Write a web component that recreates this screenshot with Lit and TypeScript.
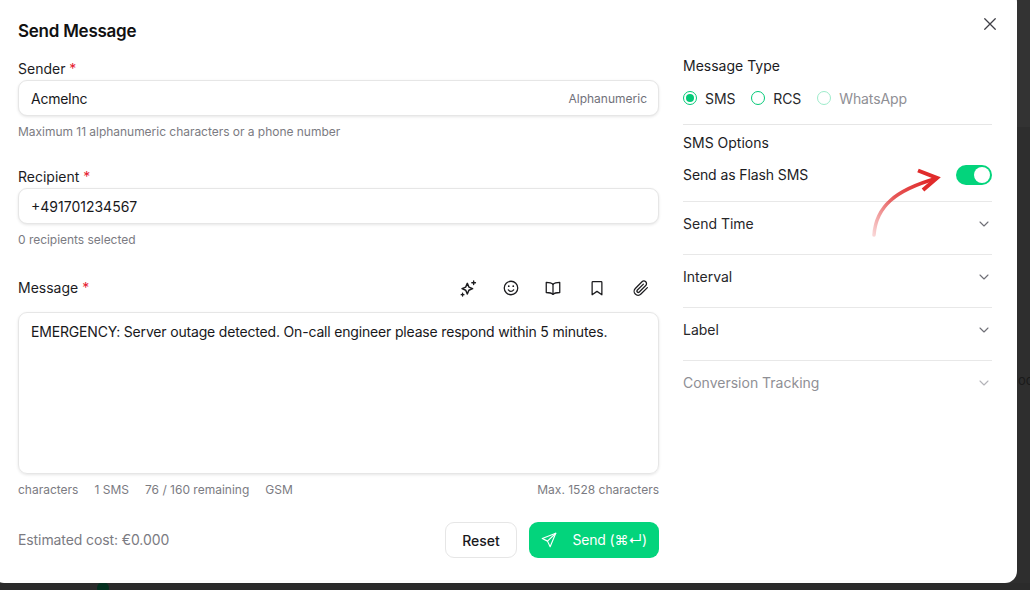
import { LitElement, html, css, svg } from 'lit';
import { customElement } from 'lit/decorators.js';

const icon = (body: unknown, size = 18, sw = 1.5) => html`<svg
  width=${size} height=${size} viewBox="0 0 24 24" fill="none" stroke="currentColor"
  stroke-width=${sw} stroke-linecap="round" stroke-linejoin="round">${body}</svg>`;

const chevron = icon(svg`<path d="M6 9l6 6 6-6"/>`, 16, 1.6);

@customElement('app-root')
export class AppRoot extends LitElement {
  static styles = css`
    :host {
      display: block;
      position: relative;
      width: 1030px;
      height: 590px;
      overflow: hidden;
      background: linear-gradient(#333 0 127px, #2e2e2e 127px 583px, #2b2b2b 583px);
      font-family: Inter, 'Noto Sans', sans-serif;
      color: #18181b;
      font-size: 14px;
    }
    .modal {
      position: relative;
      box-sizing: border-box;
      width: 1025px;
      height: 593px;
      margin: -10px 0 0 -8px;
      background: #fff;
      border-radius: 12px;
      padding: 10px 25px 0 26px;
      display: flex;
      gap: 24px;
    }
    .left {
      width: 641px;
      display: flex;
      flex-direction: column;
    }
    .right {
      width: 309px;
      padding-top: 57px;
    }
    h1 {
      margin: 0;
      padding-top: 20px;
      height: 22px;
      line-height: 22px;
      font-size: 17px;
      font-weight: 600;
      letter-spacing: -0.25px;
      color: #111;
    }
    .label {
      height: 18px;
      line-height: 18px;
      font-size: 14px;
      color: #1c1c1f;
    }
    .req {
      color: #e5202e;
    }
    .sender-label { margin-top: 18px; }
    .recipient-label { margin-top: 29px; }
    .input {
      box-sizing: border-box;
      height: 36px;
      margin-top: 2px;
      padding: 0 11px 0 12px;
      display: flex;
      align-items: center;
      justify-content: space-between;
      border: 1px solid #e6e6e6;
      border-radius: 9px;
      box-shadow: 0 1px 3px rgba(0, 0, 0, 0.1);
      background: #fff;
      color: #18181b;
    }
    .name { letter-spacing: -0.25px; }
    .hint {
      font-size: 12px;
      color: #71717a;
    }
    .help {
      margin-top: 8px;
      height: 15px;
      line-height: 15px;
      font-size: 12px;
      letter-spacing: -0.03px;
      color: #7b7b82;
    }
    .message-head {
      margin-top: 29px;
      height: 24px;
      display: flex;
      align-items: center;
      justify-content: space-between;
    }
    .tools {
      display: flex;
      gap: 26px;
      padding-right: 9px;
      color: #1c1c1f;
    }
    .tools svg { display: block; }
    .tools svg:nth-child(-n + 2) { margin-right: -2px; }
    .textarea {
      box-sizing: border-box;
      height: 162px;
      margin-top: 12px;
      padding: 9px 12px;
      line-height: 20px;
      letter-spacing: -0.175px;
      border: 1px solid #e6e6e6;
      border-radius: 9px;
      box-shadow: 0 1px 3px rgba(0, 0, 0, 0.1);
      color: #18181b;
    }
    .counts {
      margin-top: 8px;
      height: 16px;
      line-height: 16px;
      display: flex;
      justify-content: space-between;
      font-size: 12px;
      color: #7b7b82;
    }
    .counts div {
      display: flex;
      gap: 16px;
    }
    .footer {
      margin-top: 24px;
      display: flex;
      align-items: center;
      justify-content: space-between;
    }
    .cost {
      color: #7b7b82;
      font-size: 14px;
      line-height: 16px;
      letter-spacing: -0.1px;
    }
    .actions {
      display: flex;
      gap: 12px;
    }
    .btn {
      box-sizing: border-box;
      height: 36px;
      border-radius: 9px;
      display: flex;
      align-items: center;
      font-family: inherit;
      font-size: 14px;
      font-weight: 500;
    }
    .reset {
      width: 72px;
      justify-content: center;
      background: #fff;
      border: 1px solid #e6e6e6;
      color: #18181b;
    }
    .send {
      width: 130px;
      padding: 0 12px 0 11px;
      justify-content: space-between;
      background: #03d47c;
      border: none;
      color: #fff;
      font-weight: 400;
      letter-spacing: -0.15px;
    }
    .send span { padding-bottom: 1px; }
    .section-title {
      height: 18px;
      line-height: 18px;
      color: #1c1c1f;
    }
    .radios {
      margin-top: 14px;
      height: 18px;
      display: flex;
      gap: 16px;
      align-items: center;
      letter-spacing: -0.1px;
    }
    .radio {
      display: flex;
      align-items: center;
      gap: 8px;
      color: #27272a;
    }
    .radio i {
      box-sizing: border-box;
      width: 14px;
      height: 14px;
      border-radius: 50%;
      border: 1.5px solid #03c977;
      display: flex;
      align-items: center;
      justify-content: center;
    }
    .radio.on i::after {
      content: '';
      width: 8px;
      height: 8px;
      border-radius: 50%;
      background: #03c977;
    }
    .radio.off { color: #8f8f95; }
    .radio.off i { border-color: #9deccb; }
    .rule {
      height: 1px;
      background: #e6e6e6;
    }
    .flash-rule { margin-top: 17px; }
    .options-title { margin-top: 9px; }
    .flash {
      margin-top: 13px;
      height: 20px;
      display: flex;
      align-items: center;
      justify-content: space-between;
      color: #1c1c1f;
      letter-spacing: -0.1px;
    }
    .flash-text { padding-bottom: 1px; }
    .toggle {
      box-sizing: border-box;
      width: 36px;
      height: 20px;
      padding: 2px;
      border-radius: 10px;
      background: #03d47c;
      display: flex;
      justify-content: flex-end;
    }
    .toggle::after {
      content: '';
      width: 16px;
      height: 16px;
      border-radius: 50%;
      background: #fff;
    }
    .accordion {
      box-sizing: border-box;
      height: 53px;
      padding-bottom: 9px;
      border-top: 1px solid #e8e8e8;
      display: flex;
      align-items: center;
      justify-content: space-between;
      color: #27272a;
    }
    .first { margin-top: 16px; }
    .accordion svg { color: #6f6f76; }
    .accordion.disabled { color: #8f8f95; }
    .accordion.disabled svg { color: #b4b4b9; }
    .close {
      position: absolute;
      top: 25px;
      right: 18px;
      color: #3f3f46;
    }
    .close svg { display: block; }
    .arrow {
      position: absolute;
      left: 876px;
      top: 176px;
    }
    .behind {
      position: absolute;
      left: 1018px;
      top: 372px;
      font-size: 13px;
      color: #1a1a1a;
    }
    .dot {
      position: absolute;
      left: 97px;
      top: 582px;
      width: 12px;
      height: 12px;
      border-radius: 50%;
      background: #04301f;
    }
  `;

  render() {
    return html`
      <span class="behind">oc</span>
      <span class="dot"></span>
      <div class="modal">
        <div class="left">
          <h1>Send Message</h1>

          <div class="label sender-label">Sender <span class="req">*</span></div>
          <div class="input"><span class="name">AcmeInc</span><span class="hint">Alphanumeric</span></div>
          <div class="help">Maximum 11 alphanumeric characters or a phone number</div>

          <div class="label recipient-label">Recipient <span class="req">*</span></div>
          <div class="input"><span>+491701234567</span></div>
          <div class="help">0 recipients selected</div>

          <div class="message-head">
            <div class="label">Message <span class="req">*</span></div>
            <div class="tools">
              ${icon(svg`<path d="M10.500 5.500l2 4.700 4.700 2-4.700 2-2 4.700-2-4.700-4.700-2 4.700-2z" stroke-width="1.900"/><path d="M18.500 2.500v4.500M16.200 4.700h4.600M4.500 18v3.500M2.800 19.800h3.400" stroke-width="1.700"/>`, 19)}
              ${icon(svg`<circle cx="12" cy="12" r="9"/><path d="M8.500 14.500c1 1.300 2.200 2 3.500 2s2.500-.7 3.500-2"/><path d="M9 9.500h.01M15 9.500h.01" stroke-width="2.400"/>`, 18, 1.7)}
              ${icon(svg`<path d="M12 7c-1.500-1.500-3.500-2.500-9-2.500V18c5.500 0 7.500.8 9 2.500 1.500-1.700 3.500-2.500 9-2.500V4.500C15.500 4.500 13.500 5.500 12 7z"/><path d="M12 7v13.500"/>`, 18, 1.7)}
              ${icon(svg`<path d="M6.500 3.500h11a1 1 0 0 1 1 1V21L12 16.500 5.500 21V4.500a1 1 0 0 1 1-1z"/>`, 18, 1.7)}
              ${icon(svg`<path d="M20.500 11.500l-8.600 8.600a5.300 5.300 0 0 1-7.500-7.500l8.900-8.900a3.500 3.500 0 0 1 5 5l-8.900 8.900a1.800 1.800 0 0 1-2.500-2.500l8.300-8.300"/>`, 18, 1.7)}
            </div>
          </div>
          <div class="textarea">EMERGENCY: Server outage detected. On-call engineer please respond within 5 minutes.</div>
          <div class="counts">
            <div><span>characters</span><span>1 SMS</span><span>76 / 160 remaining</span><span>GSM</span></div>
            <span>Max. 1528 characters</span>
          </div>

          <div class="footer">
            <span class="cost">Estimated cost: €0.000</span>
            <div class="actions">
              <button class="btn reset">Reset</button>
              <button class="btn send">
                ${icon(svg`<path d="M21 3L3 10l7 3.500L13.500 21z"/><path d="M10 13.500L21 3"/>`, 18, 1.5)}
                <span>Send (⌘↵)</span>
              </button>
            </div>
          </div>
        </div>

        <div class="right">
          <div class="section-title">Message Type</div>
          <div class="radios">
            <label class="radio on"><i></i>SMS</label>
            <label class="radio"><i></i>RCS</label>
            <label class="radio off"><i></i>WhatsApp</label>
          </div>
          <div class="rule flash-rule"></div>
          <div class="section-title options-title">SMS Options</div>
          <div class="flash"><span class="flash-text">Send as Flash SMS</span><span class="toggle"></span></div>
          <div class="accordion first"><span>Send Time</span>${chevron}</div>
          <div class="accordion"><span>Interval</span>${chevron}</div>
          <div class="accordion"><span>Label</span>${chevron}</div>
          <div class="accordion disabled"><span>Conversion Tracking</span>${chevron}</div>
        </div>

        <span class="close">${icon(svg`<path d="M5 5l14 14M19 5L5 19"/>`, 18, 1.7)}</span>
        <svg class="arrow" width="76" height="74" viewBox="0 0 76 74" fill="none">
          <defs>
            <linearGradient id="fade" gradientUnits="userSpaceOnUse" x1="6" y1="69" x2="60" y2="15">
              <stop offset="0" stop-color="#e02b2b" stop-opacity="0.2" />
              <stop offset="0.55" stop-color="#e02b2b" stop-opacity="0.8" />
              <stop offset="1" stop-color="#e02b2b" />
            </linearGradient>
          </defs>
          <path d="M6 69C8 40 28 24 68 12.500" stroke="url(#fade)" stroke-width="3.500" stroke-linecap="round" />
          <path d="M50 4.500L69 12L55 24" stroke="#e02b2b" stroke-width="4" />
        </svg>
      </div>
    `;
  }
}
